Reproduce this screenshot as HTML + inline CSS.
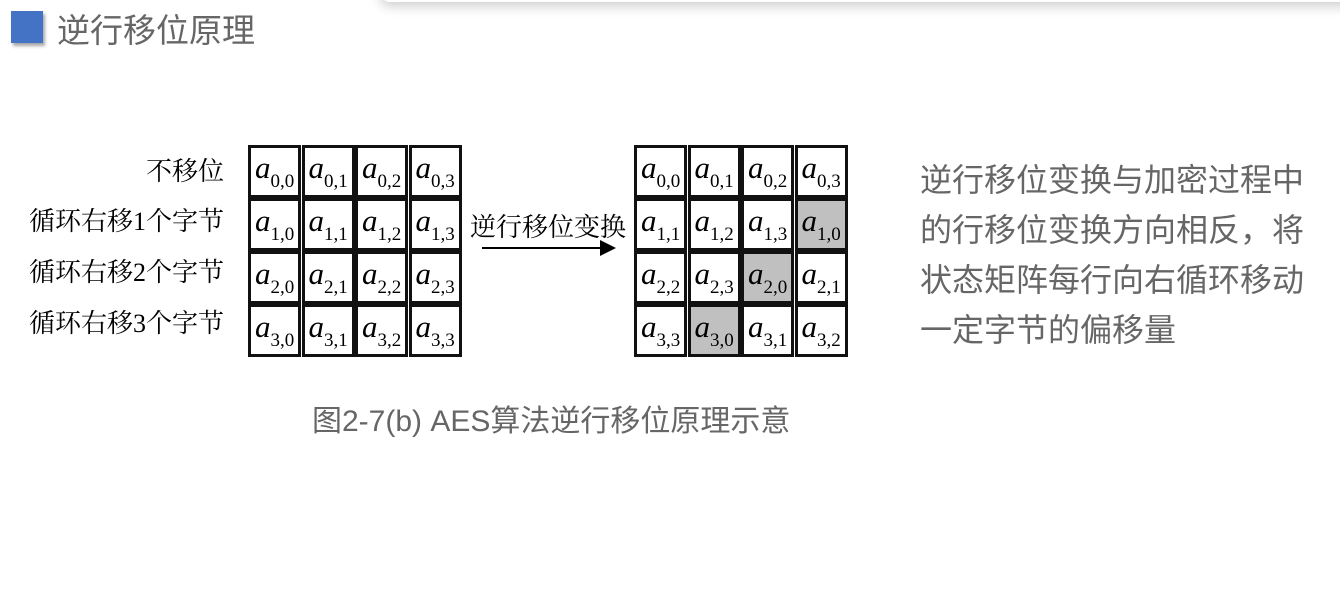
<!DOCTYPE html>
<html><head><meta charset="utf-8"><style>
body{margin:0;width:1340px;height:606px;background:#fff;position:relative;overflow:hidden;font-family:"Liberation Sans","Noto Sans CJK SC",sans-serif}
.shadow{position:absolute;left:380px;top:-20px;width:1000px;height:22px;box-shadow:0 4px 12px rgba(0,0,0,0.2);background:#fff;border-radius:10px}
.sq{position:absolute;left:11px;top:11px;width:32px;height:32px;background:#4472c4;box-shadow:2px 3px 3px rgba(0,0,0,0.35)}
.title{position:absolute;left:57px;top:11px;font-size:33px;color:#666;line-height:40px}
.c{position:absolute;height:47px;border:3px solid #111;background:#fff;font-family:"Liberation Serif",serif;font-style:italic;font-size:31px;line-height:40px;padding-left:4px;box-sizing:content-box;width:43px;white-space:nowrap;overflow:hidden}
.c sub{font-style:normal;font-size:19px;vertical-align:-9px}
.g{background:#c0c0c0}
.lab{position:absolute;right:1116px;font-family:"Liberation Serif","Noto Serif CJK SC",serif;font-size:26px;line-height:30px;white-space:nowrap}
.desc{position:absolute;left:920px;top:155px;font-size:32px;line-height:50px;color:#666;width:395px}
.cap{position:absolute;left:312px;top:402px;font-size:30px;color:#666;line-height:40px;white-space:nowrap}
</style></head><body>
<div class="shadow"></div>
<div class="sq"></div><div class="title">逆行移位原理</div>
<div class="lab" style="top:157px">不移位</div>
<div class="lab" style="top:207px">循环右移1个字节</div>
<div class="lab" style="top:258px">循环右移2个字节</div>
<div class="lab" style="top:309px">循环右移3个字节</div>
<div id="L"></div><div id="R"></div>
<div style="position:absolute;left:470px;top:213px;font-family:'Liberation Serif','Noto Serif CJK SC',serif;font-size:26px;line-height:30px;white-space:nowrap">逆行移位变换</div>
<div style="position:absolute;left:482px;top:247px;width:120px;height:2px;background:#000"></div>
<div style="position:absolute;left:600px;top:240px;width:0;height:0;border-left:16px solid #000;border-top:8px solid transparent;border-bottom:8px solid transparent"></div>
<div class="desc">逆行移位变换与加密过程中的行移位变换方向相反，将状态矩阵每行向右循环移动一定字节的偏移量</div>
<div class="cap">图2-7(b) AES算法逆行移位原理示意</div>
<script>
function grid(x0,map,gray){let h='';for(let r=0;r<4;r++)for(let c=0;c<4;c++){const k=map(r,c);const isg=gray.includes(r+','+c);h+=`<div class="c${isg?' g':''}" style="left:${x0+c*53.5}px;top:${145+r*53}px"><i>a</i><sub>${r},${k}</sub></div>`;}return h;}
document.getElementById('L').innerHTML=grid(248,(r,c)=>c,[]);
document.getElementById('R').innerHTML=grid(634,(r,c)=>(c+r)%4,['1,3','2,2','3,1']);
</script>
</body></html>
